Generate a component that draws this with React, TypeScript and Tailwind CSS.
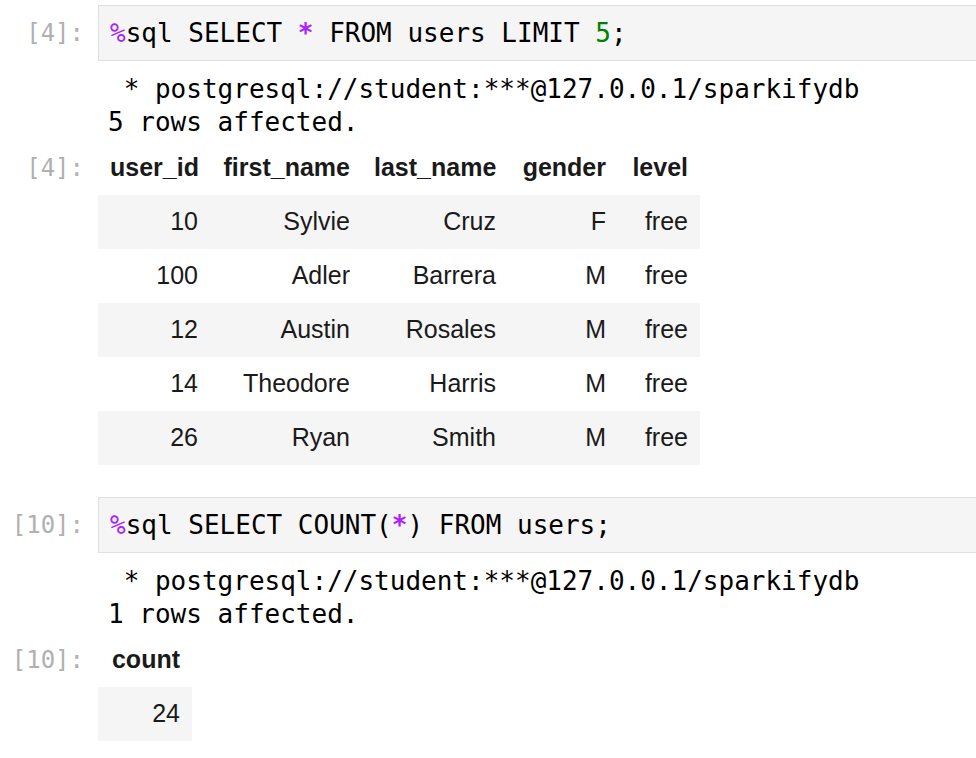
import React from 'react'

const mono = "font-['DejaVu_Sans_Mono',monospace]"
const sans = "font-['Liberation_Sans',Arial,sans-serif]"

const users = [
  ['10', 'Sylvie', 'Cruz', 'F', 'free'],
  ['100', 'Adler', 'Barrera', 'M', 'free'],
  ['12', 'Austin', 'Rosales', 'M', 'free'],
  ['14', 'Theodore', 'Harris', 'M', 'free'],
  ['26', 'Ryan', 'Smith', 'M', 'free'],
]

const cols = ['w-[112px]', 'w-[152px]', 'w-[146px]', 'w-[110px]', 'w-[82px]']

const Prompt = ({ n }: { n: string }) => (
  <div className={`w-[98px] shrink-0 pr-[14px] text-right text-[24px] text-[#b0b0b0] ${mono}`}>
    [{n}]:
  </div>
)

const InputBox = ({ children }: { children: React.ReactNode }) => (
  <div className={`flex-1 h-[56px] flex items-center pl-[11px] bg-[#f5f5f5] border-y border-l border-[#e0e0e0] text-[26px] text-black whitespace-pre ${mono}`}>
    {children}
  </div>
)

const Output = ({ rows }: { rows: string }) => (
  <div className={`ml-[98px] mt-[12px] pl-[10px] text-[26px] leading-[33px] text-black whitespace-pre ${mono}`}>
    <div> * postgresql://student:***@127.0.0.1/sparkifydb</div>
    <div>{rows} rows affected.</div>
  </div>
)

export default function App() {
  return (
    <div className='w-[976px] h-[758px] overflow-hidden bg-white pt-[5px]'>
      {/* cell 4 */}
      <div className='flex items-center'>
        <Prompt n='4' />
        <InputBox>
          <span className='text-[#aa22ff]'>%</span>sql SELECT <span className='text-[#aa22ff] font-bold'>*</span> FROM users LIMIT <span className='text-[#008000]'>5</span>;
        </InputBox>
      </div>
      <Output rows='5' />

      <div className='flex mt-[2px]'>
        <div className='h-[54px] flex items-center'>
          <Prompt n='4' />
        </div>
        <div className={`flex flex-col text-[25px] text-[#1a1a1a] ${sans}`}>
          <div className='flex h-[54px] items-center font-bold'>
            {['user_id', 'first_name', 'last_name', 'gender', 'level'].map((h, i) => (
              <div key={h} className={`${cols[i]} px-[12px] text-right`}>{h}</div>
            ))}
          </div>
          {users.map((r, ri) => (
            <div key={ri} className={`flex h-[54px] items-center ${ri % 2 === 0 ? 'bg-[#f5f5f5]' : 'bg-white'}`}>
              {r.map((c, i) => (
                <div key={i} className={`${cols[i]} px-[12px] text-right`}>{c}</div>
              ))}
            </div>
          ))}
        </div>
      </div>

      {/* cell 10 */}
      <div className='flex items-center mt-[32px]'>
        <Prompt n='10' />
        <InputBox>
          <span className='text-[#aa22ff]'>%</span>sql SELECT COUNT(<span className='text-[#aa22ff] font-bold'>*</span>) FROM users;
        </InputBox>
      </div>
      <Output rows='1' />

      <div className='flex mt-[2px]'>
        <div className='h-[54px] flex items-center'>
          <Prompt n='10' />
        </div>
        <div className={`flex flex-col text-[25px] text-[#1a1a1a] ${sans}`}>
          <div className='flex h-[54px] items-center font-bold'>
            <div className='w-[94px] px-[12px] text-right'>count</div>
          </div>
          <div className='flex h-[54px] items-center bg-[#f5f5f5]'>
            <div className='w-[94px] px-[12px] text-right'>24</div>
          </div>
        </div>
      </div>
    </div>
  )
}
